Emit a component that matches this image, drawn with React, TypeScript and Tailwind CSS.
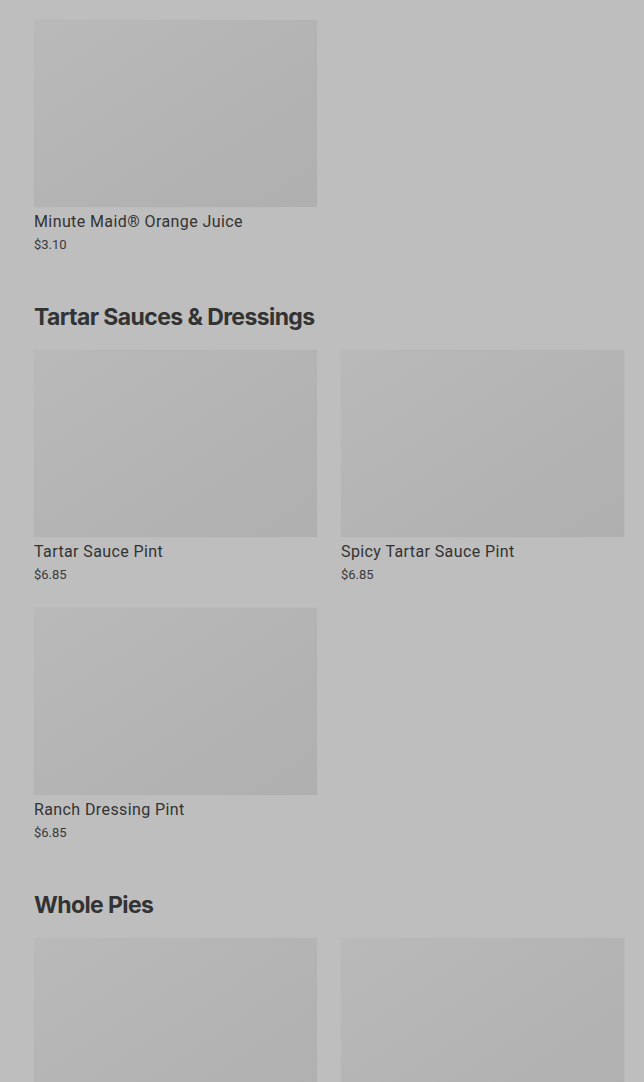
type Item = { name: string; price: string };

type Section = { title?: string; items: Item[] };

const sections: Section[] = [
  { items: [{ name: "Minute Maid® Orange Juice", price: "$3.10" }] },
  {
    title: "Tartar Sauces & Dressings",
    items: [
      { name: "Tartar Sauce Pint", price: "$6.85" },
      { name: "Spicy Tartar Sauce Pint", price: "$6.85" },
      { name: "Ranch Dressing Pint", price: "$6.85" },
    ],
  },
  {
    title: "Whole Pies",
    items: [
      { name: "Apple Pie", price: "$9.99" },
      { name: "Pumpkin Pie", price: "$9.99" },
    ],
  },
];

function ItemCard({ item }: { item: Item }) {
  return (
    <div className="flex flex-col">
      <div className="h-[187px] w-full bg-gradient-to-br from-[#b9b9b9] to-[#afafaf] ring-1 ring-[#bcbcbc]" />
      <div className="mt-[5px] text-[16px] leading-[20px] font-normal tracking-[0.4px] text-[#333333]">
        {item.name}
      </div>
      <div className="mt-[3px] text-[13px] leading-[20px] font-normal text-[#3a3a3a]">
        {item.price}
      </div>
    </div>
  );
}

export default function App() {
  return (
    <div
      className="h-[1082px] overflow-hidden bg-[#bebebe] pl-[34px] pr-[20px] pt-[20px]"
      style={{ fontFamily: "Roboto, 'Liberation Sans', sans-serif" }}
    >
      {sections.map((section, i) => (
        <section key={i} className={i > 0 ? "mt-[46px]" : ""}>
          {section.title && (
            <h2
              className="mb-[17px] text-[23px] leading-[32px] font-bold tracking-[-0.6px] text-[#333333]"
              style={{ fontFamily: "Inter, 'Liberation Sans', sans-serif" }}
            >
              {section.title}
            </h2>
          )}
          <div className="grid grid-cols-2 gap-x-[24px] gap-y-[23px]">
            {section.items.map((item) => (
              <ItemCard key={item.name} item={item} />
            ))}
          </div>
        </section>
      ))}
    </div>
  );
}
